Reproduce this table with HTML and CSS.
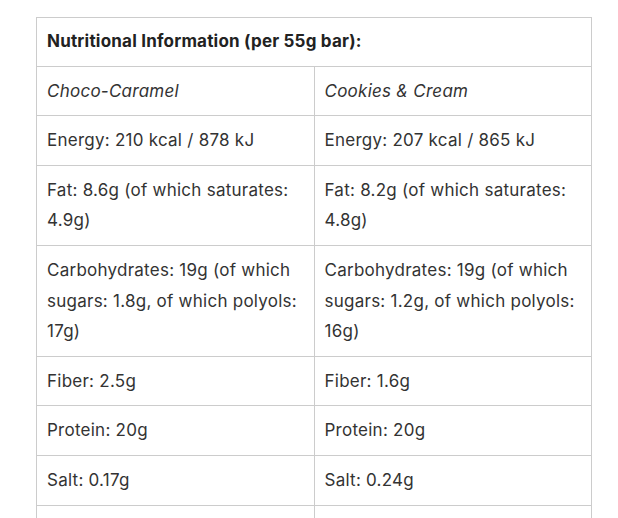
FILE: index.html
```html
<!DOCTYPE html>
<html>
<head>
<meta charset="utf-8">
<link rel="stylesheet" href="styles.css">
</head>
<body>
<div class="wrap">
<table class="nutri">
<thead>
<tr><th colspan="2">Nutritional Information (per 55g bar):</th></tr>
</thead>
<tbody>
<tr><td><em>Choco-Caramel</em></td><td><em>Cookies &amp; Cream</em></td></tr>
<tr><td>Energy: 210 kcal / 878 kJ</td><td>Energy: 207 kcal / 865 kJ</td></tr>
<tr><td>Fat: 8.6g (of which saturates: 4.9g)</td><td>Fat: 8.2g (of which saturates: 4.8g)</td></tr>
<tr><td>Carbohydrates: 19g (of which sugars: 1.8g, of which polyols: 17g)</td><td>Carbohydrates: 19g (of which sugars: 1.2g, of which polyols: 16g)</td></tr>
<tr><td>Fiber: 2.5g</td><td>Fiber: 1.6g</td></tr>
<tr><td>Protein: 20g</td><td>Protein: 20g</td></tr>
<tr><td>Salt: 0.17g</td><td>Salt: 0.24g</td></tr>
<tr><td>&nbsp;</td><td>&nbsp;</td></tr>
</tbody>
</table>
</div>
</body>
</html>
```

FILE: styles.css
```css
html, body {
  margin: 0;
  padding: 0;
  background: #fff;
}
body {
  font-family: Inter, "Noto Sans", sans-serif;
  font-size: 17px;
  letter-spacing: 0.25px;
  color: #333;
}
.wrap {
  padding: 17px 0 0 36px;
}
.nutri {
  width: 556px;
  border-collapse: collapse;
  table-layout: fixed;
}
.nutri th,
.nutri td {
  border: 1px solid #ccc;
  padding: 9px 10px;
  line-height: 1.8;
  text-align: left;
  vertical-align: top;
}
.nutri th {
  padding-top: 8px;
  font-weight: 700;
  letter-spacing: 0.2px;
  color: #222;
}
.nutri em {
  font-style: italic;
}
```
